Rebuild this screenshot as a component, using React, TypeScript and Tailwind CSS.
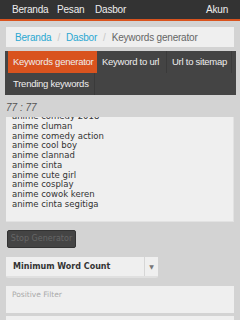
import React from "react";

const lines = [
  "anime comedy 2018",
  "anime cluman",
  "anime comedy action",
  "anime cool boy",
  "anime clannad",
  "anime cinta",
  "anime cute girl",
  "anime cosplay",
  "anime cowok keren",
  "anime cinta segitiga",
];

export default function App() {
  return (
    <div
      className="w-[240px] h-[320px] overflow-hidden bg-[#d3d3d3] text-[#333]"
      style={{ fontFamily: '"Liberation Sans", Arial, sans-serif' }}
    >
      {/* navbar */}
      <div className="h-[21px] bg-[#333] border-b-2 border-[#d9531e] flex items-center text-[10px] text-[#eee] pl-[12px] pr-[12px] tracking-[-0.2px]">
        <span className="w-[45px]">Beranda</span>
        <span className="w-[38px]">Pesan</span>
        <span>Dasbor</span>
        <span className="ml-auto">Akun</span>
      </div>

      {/* breadcrumb */}
      <div className="mx-[6px] mt-[6px] h-[20px] bg-[#efefef] flex items-center pl-[9px] text-[10px] tracking-[-0.2px]">
        <span className="text-[#2aa8d2]">Beranda</span>
        <span className="text-[#c8c8c8] mx-[6px]">/</span>
        <span className="text-[#2aa8d2]">Dasbor</span>
        <span className="text-[#c8c8c8] mx-[6px]">/</span>
        <span className="text-[#666]">Keywords generator</span>
      </div>

      {/* tabs */}
      <div className="ml-[5px] mr-[4px] mt-[4px] bg-[#444] pl-[3px] flex flex-wrap text-[9.5px] text-[#eee] tracking-[-0.25px] whitespace-nowrap">
        <div className="h-[22px] flex items-center pl-[5px] bg-[#d9531e] w-[89px]">Keywords generator</div>
        <div className="h-[22px] flex items-center pl-[5px] border-r border-[#3a3a3a] w-[70px]">Keyword to url</div>
        <div className="h-[22px] flex items-center pl-[5px] border-r border-[#3a3a3a] w-[65px]">Url to sitemap</div>
        <div className="h-[22px] flex items-center pl-[5px] border-r border-[#3a3a3a] w-[87px]">Trending keywords</div>
      </div>

      <div className="mx-[6px] mt-[3px] h-[18px] flex items-center text-[10px] italic text-[#555]">77 : 77</div>

      {/* textarea */}
      <div className="mx-[6px] mt-[1px] h-[105px] bg-[#efefef] border-b border-r border-[#e2e2e2] overflow-hidden pl-[6px] text-[8.5px] leading-[9.75px] text-[#333]"
        style={{ fontFamily: '"DejaVu Sans", sans-serif' }}>
        <div className="-mt-[5px]">
          {lines.map((l) => (
            <div key={l}>{l}</div>
          ))}
        </div>
      </div>

      {/* button */}
      <div className="ml-[7px] mt-[8px] w-[69px] h-[18px] rounded-[2px] bg-[#444] border border-[#333] flex items-center justify-center text-[8px] text-[#666]"
        style={{ fontFamily: '"DejaVu Sans", sans-serif' }}>
        Stop Generator
      </div>

      {/* select */}
      <div className="ml-[6px] mt-[9px] w-[152px] h-[21px] bg-[#efefef] border-b-2 border-[#e0e0e0] rounded-b-[2px] flex items-center text-[8px] font-bold text-[#333]"
        style={{ fontFamily: '"DejaVu Sans", sans-serif' }}>
        <span className="pl-[7px] flex-1">Minimum Word Count</span>
        <span className="w-[14px] h-full border-l border-[#d6d6d6] flex items-center justify-center text-[6px] text-[#777]">▼</span>
      </div>

      {/* positive filter */}
      <div className="mx-[6px] mt-[8px] h-[27px] bg-[#efefef] pl-[6px] pt-[3px] text-[7.5px] text-[#aaa]"
        style={{ fontFamily: '"DejaVu Sans", sans-serif' }}>
        Positive Filter
      </div>
      <div className="mx-[6px] mt-[3px] h-[27px] bg-[#efefef]" />
    </div>
  );
}
